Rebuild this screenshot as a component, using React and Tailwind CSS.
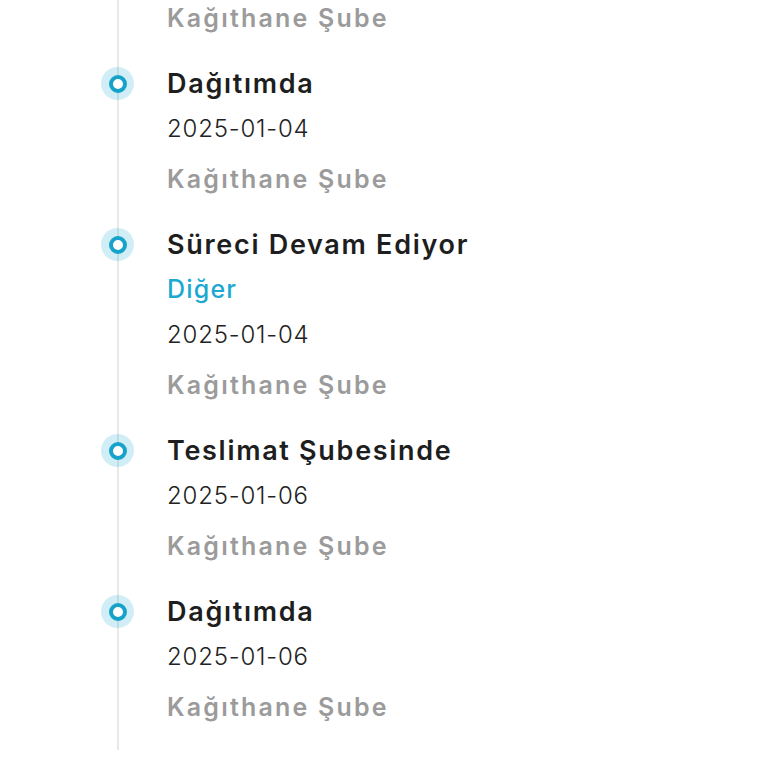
const EVENTS = [
  { title: 'Dağıtımda', date: '2025-01-04', branch: 'Kağıthane Şube' },
  { title: 'Süreci Devam Ediyor', note: 'Diğer', date: '2025-01-04', branch: 'Kağıthane Şube' },
  { title: 'Teslimat Şubesinde', date: '2025-01-06', branch: 'Kağıthane Şube' },
  { title: 'Dağıtımda', date: '2025-01-06', branch: 'Kağıthane Şube' },
];

function Dot() {
  return (
    <div className="absolute left-[-66px] top-[6px] h-[33px] w-[33px] rounded-full bg-[#1aa8d3]/20 flex items-center justify-center">
      <div className="h-[18px] w-[18px] rounded-full border-[4px] border-[#17a3c9] bg-white" />
    </div>
  );
}

export default function App() {
  return (
    <div
      className="h-[768px] w-[768px] overflow-hidden bg-white"
      style={{ fontFamily: 'Inter, "Noto Sans", sans-serif' }}
    >
      <div className="relative ml-[117px] w-[600px] border-l-2 border-[#e8e8e8] pl-[48px]">
        {/* tail of the previous entry, scrolled off the top */}
        <div className="-mt-[4px] pb-[20px] text-[25px] leading-[45px] font-semibold tracking-[2.2px] text-[#9b9b9b]">
          Kağıthane Şube
        </div>

        {EVENTS.map((event, i) => (
          <div key={i} className="relative pb-[20px]">
            <Dot />
            <div className="text-[27px] leading-[45px] font-semibold tracking-[1.7px] text-[#1e1e1e]">
              {event.title}
            </div>
            {event.note && (
              <div className="text-[25px] leading-[45px] font-medium tracking-[1.2px] text-[#1ca9d1]">
                {event.note}
              </div>
            )}
            <div className="text-[24px] leading-[45px] font-light tracking-[0.8px] text-[#222]">{event.date}</div>
            <div className="mt-[6px] text-[25px] leading-[45px] font-semibold tracking-[2.2px] text-[#9b9b9b]">
              {event.branch}
            </div>
          </div>
        ))}
      </div>
    </div>
  );
}
